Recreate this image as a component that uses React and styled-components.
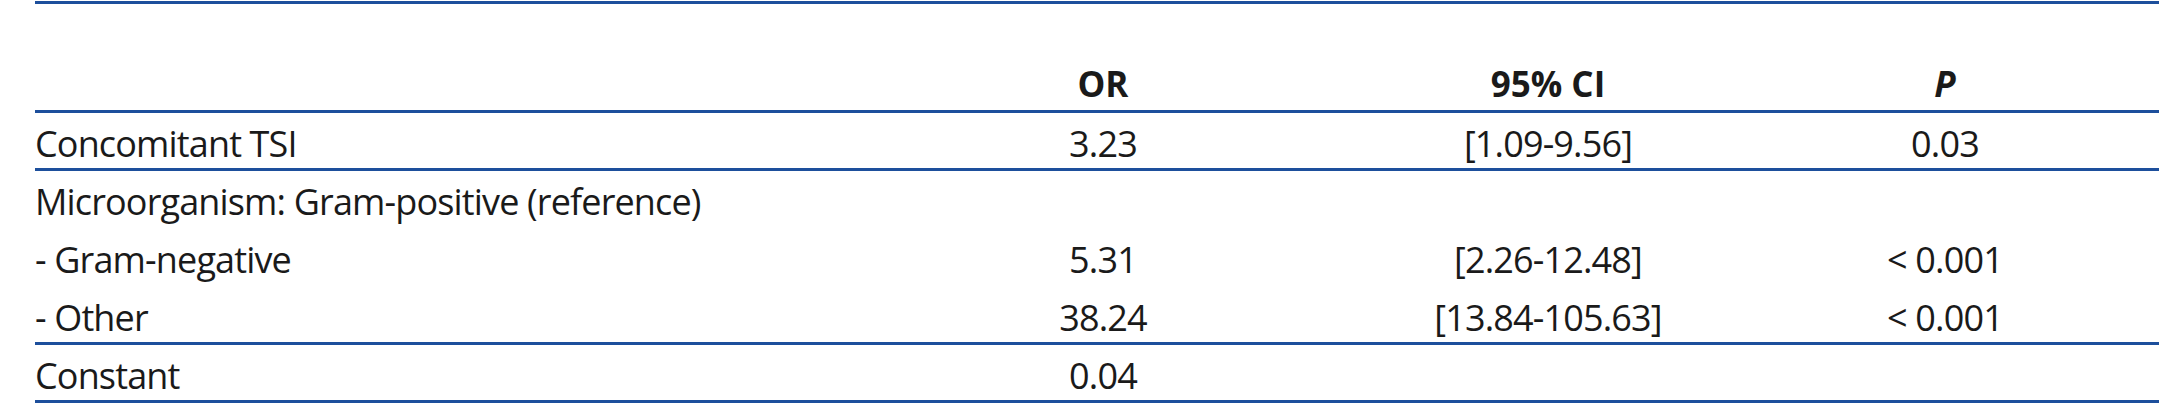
import React from "react";
import styled, { createGlobalStyle } from "styled-components";

const GlobalStyle = createGlobalStyle`
  html, body {
    margin: 0;
    padding: 0;
    background: #fff;
  }
  body {
    font-family: "Open Sans", "Noto Sans", sans-serif;
    color: #1a1a1a;
  }
`;

const RULE = "#1d4f9c";

const Wrap = styled.div`
  padding: 1px 25px 0 35px;
  width: 2124px;
`;

const Table = styled.div`
  border-top: 3px solid ${RULE};
`;

const Row = styled.div`
  display: grid;
  grid-template-columns: 845px 446px 444px 350px 39px;
  box-sizing: border-box;
  height: ${(p) => (p.$head ? "109px" : "58px")};
  align-items: ${(p) => (p.$head ? "end" : "start")};
  border-bottom: ${(p) => (p.$ruled ? `3px solid ${RULE}` : "none")};
`;

const Cell = styled.div`
  font-size: 36px;
  font-weight: 400;
  line-height: 49px;
  letter-spacing: -0.85px;
  padding-top: 5.5px;
  white-space: nowrap;
  text-align: ${(p) => (p.$left ? "left" : "center")};
`;

const HeadCell = styled.div`
  font-size: 35px;
  font-weight: 700;
  line-height: 48px;
  padding-bottom: 2px;
  text-align: center;
  font-style: ${(p) => (p.$italic ? "italic" : "normal")};
`;

const rows = [
  { label: "Concomitant TSI", or: "3.23", ci: "[1.09-9.56]", p: "0.03", ruled: true },
  { label: "Microorganism: Gram-positive (reference)", or: "", ci: "", p: "" },
  { label: "- Gram-negative", or: "5.31", ci: "[2.26-12.48]", p: "< 0.001" },
  { label: "- Other", or: "38.24", ci: "[13.84-105.63]", p: "< 0.001", ruled: true },
  { label: "Constant", or: "0.04", ci: "", p: "", ruled: true },
];

export default function App() {
  return (
    <>
      <GlobalStyle />
      <Wrap>
        <Table>
          <Row $head $ruled>
            <div />
            <HeadCell>OR</HeadCell>
            <HeadCell>95% CI</HeadCell>
            <HeadCell $italic>P</HeadCell>
            <div />
          </Row>
          {rows.map((r) => (
            <Row key={r.label} $ruled={r.ruled}>
              <Cell $left>{r.label}</Cell>
              <Cell>{r.or}</Cell>
              <Cell>{r.ci}</Cell>
              <Cell>{r.p}</Cell>
              <div />
            </Row>
          ))}
        </Table>
      </Wrap>
    </>
  );
}
